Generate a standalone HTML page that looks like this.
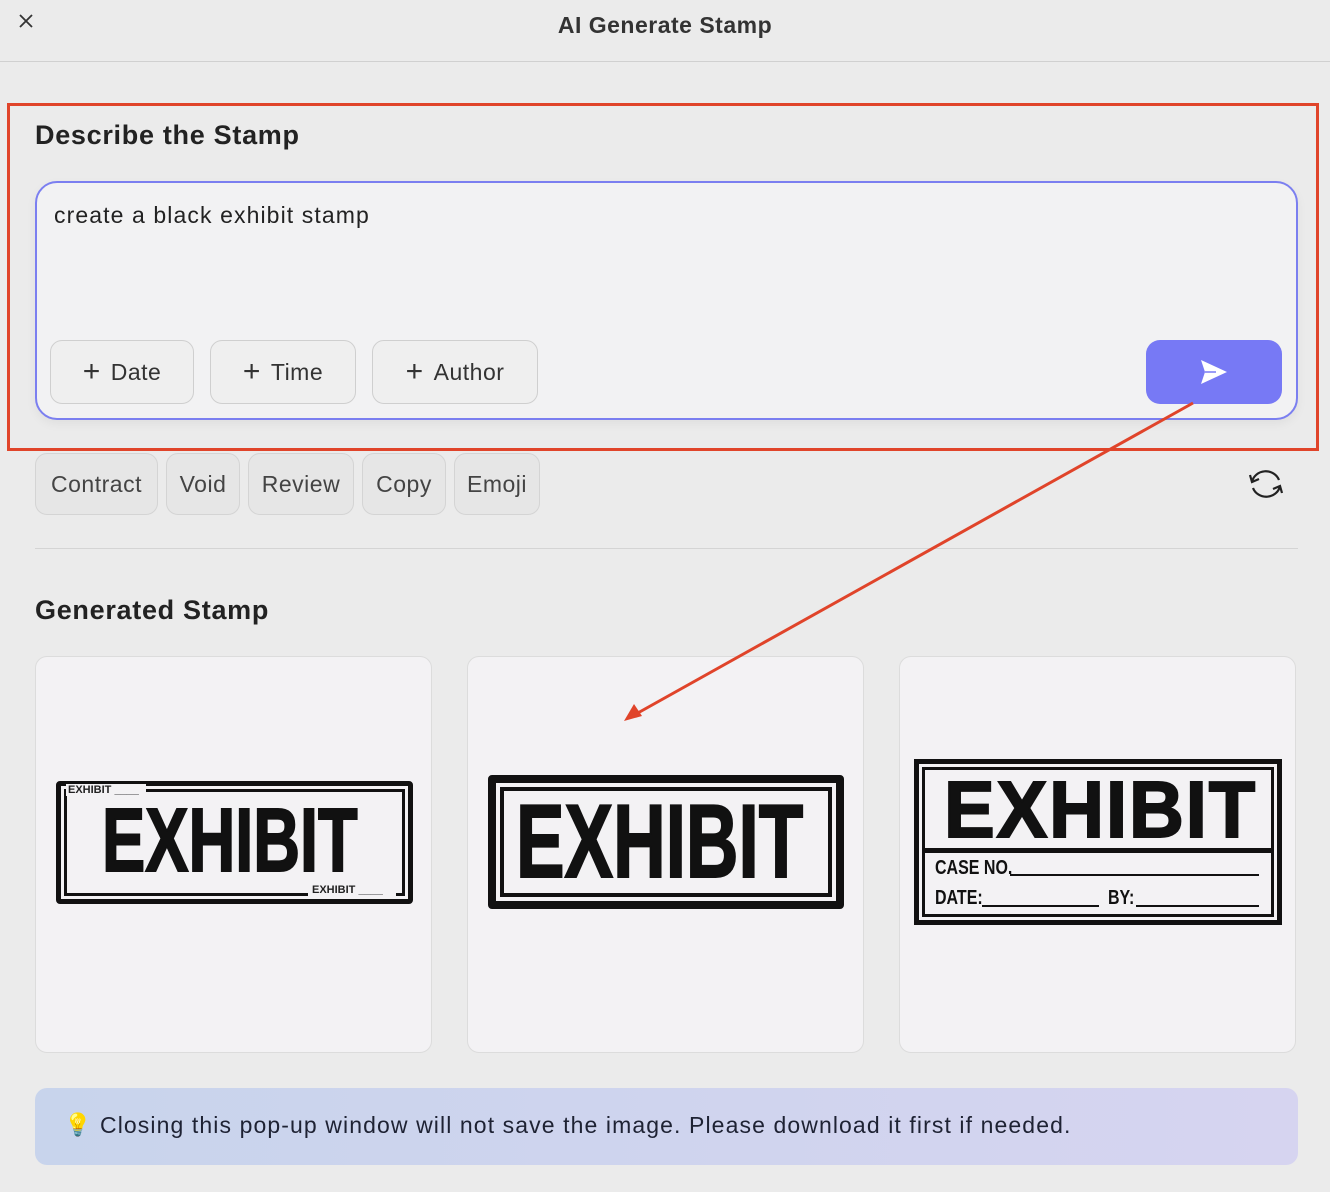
<!DOCTYPE html>
<html><head><style>
*{margin:0;padding:0;box-sizing:border-box}
body{width:1330px;height:1192px;background:#ebebeb;font-family:"Liberation Sans",sans-serif;color:#222;position:relative;overflow:hidden}
.a{position:absolute}
.btn{position:absolute;border:1px solid #cfcfcf;border-radius:12px;background:#efefef;font-size:23px;color:#333;display:flex;align-items:center;justify-content:center;letter-spacing:0.5px}
.chip{position:absolute;top:453px;height:62px;border:1px solid #d4d4d4;border-radius:12px;background:#e6e6e6;font-size:23px;color:#444;display:flex;align-items:center;justify-content:center;letter-spacing:0.5px}
.card{position:absolute;top:656px;width:397px;height:397px;background:#f3f2f4;border:1px solid #dcdcdc;border-radius:12px}
.big{font-family:"Liberation Sans Narrow","Liberation Sans",sans-serif;font-weight:bold;color:#111;position:absolute;white-space:nowrap;transform-origin:left top}
</style></head><body>
<svg class="a" style="left:18px;top:13px" width="16" height="16" viewBox="0 0 16 16" stroke="#333" stroke-width="1.8"><path d="M2 2L14 14M14 2L2 14"/></svg>
<div class="a" style="left:0;width:1330px;top:12px;text-align:center;font-size:23px;font-weight:bold;color:#333;letter-spacing:0.5px">AI Generate Stamp</div>
<div class="a" style="left:0;top:61px;width:1330px;height:1px;background:#d0d0d0"></div>

<div class="a" style="left:7px;top:103px;width:1312px;height:348px;border:3px solid #e0442a"></div>
<div class="a" style="left:35px;top:120px;font-size:27px;font-weight:bold;color:#222;letter-spacing:0.7px">Describe the Stamp</div>
<div class="a" style="left:35px;top:181px;width:1263px;height:239px;border:2px solid #7b7ff0;border-radius:22px;background:#f2f2f3;box-shadow:0 4px 10px rgba(0,0,0,.05)"></div>
<div class="a" style="left:54px;top:202px;font-size:23px;color:#222;letter-spacing:1.1px">create a black exhibit stamp</div>
<div class="btn" style="left:50px;top:340px;width:144px;height:64px"><span style="font-size:30px;font-weight:300;margin-right:10px">+</span>Date</div>
<div class="btn" style="left:210px;top:340px;width:146px;height:64px"><span style="font-size:30px;font-weight:300;margin-right:10px">+</span>Time</div>
<div class="btn" style="left:372px;top:340px;width:166px;height:64px"><span style="font-size:30px;font-weight:300;margin-right:10px">+</span>Author</div>
<div class="a" style="left:1146px;top:340px;width:136px;height:64px;background:#7779f5;border-radius:14px"></div>
<svg class="a" style="left:1198px;top:358px" width="32" height="28" viewBox="0 0 32 28"><path d="M3 2 L29 14 L3 26 L7 14 Z" fill="#fff"/><path d="M7 14 H18" stroke="#9a9cf7" stroke-width="2"/></svg>

<div class="chip" style="left:35px;width:123px">Contract</div>
<div class="chip" style="left:166px;width:74px">Void</div>
<div class="chip" style="left:248px;width:106px">Review</div>
<div class="chip" style="left:362px;width:84px">Copy</div>
<div class="chip" style="left:454px;width:86px">Emoji</div>
<svg class="a" style="left:1248px;top:466px" width="36" height="36" viewBox="0 0 36 36" fill="none" stroke="#222" stroke-width="2.2"><path d="M4 16 A14 13 0 0 1 31 14"/><path d="M2 9 L4 16 L11 13"/><path d="M32 20 A14 13 0 0 1 5 22"/><path d="M34 27 L32 20 L25 23"/></svg>
<div class="a" style="left:35px;top:548px;width:1263px;height:1px;background:#d4d4d4"></div>
<div class="a" style="left:35px;top:595px;font-size:27px;font-weight:bold;color:#222;letter-spacing:0.7px">Generated Stamp</div>

<div class="card" style="left:35px"></div>
<div class="card" style="left:467px"></div>
<div class="card" style="left:899px"></div>

<!-- stamp 1 -->
<div class="a" style="left:56px;top:781px;width:357px;height:123px;border:5px solid #111;border-radius:4px"></div>
<div class="a" style="left:64px;top:789px;width:341px;height:107px;border:3px solid #111"></div>
<div class="a" style="left:66px;top:784px;width:80px;height:12px;background:#f3f2f4;font-size:11px;font-weight:bold;padding-left:2px">EXHIBIT ____</div>
<div class="a" style="left:308px;top:884px;width:88px;height:14px;background:#f3f2f4;font-size:11px;font-weight:bold;padding-left:4px">EXHIBIT ____</div>
<div class="big" style="left:102px;top:796px;font-size:90px;line-height:90px;transform:scaleX(0.72);-webkit-text-stroke:2px #111">EXHIBIT</div>
<!-- stamp 2 -->
<div class="a" style="left:488px;top:775px;width:356px;height:134px;border:8px solid #111;border-radius:4px"></div>
<div class="a" style="left:500px;top:787px;width:332px;height:110px;border:4px solid #111"></div>
<div class="big" style="left:516px;top:790px;font-size:104px;line-height:104px;transform:scaleX(0.70);-webkit-text-stroke:2px #111">EXHIBIT</div>
<!-- stamp 3 -->
<div class="a" style="left:914px;top:759px;width:368px;height:166px;border:5px solid #111"></div>
<div class="a" style="left:922px;top:767px;width:352px;height:150px;border:3px solid #111"></div>
<div class="a" style="left:922px;top:848px;width:352px;height:5px;background:#111"></div>
<div class="big" style="left:944px;top:770px;font-size:80px;line-height:80px;transform:scaleX(0.95);-webkit-text-stroke:2px #111;letter-spacing:2px">EXHIBIT</div>
<div class="big" style="left:935px;top:857px;font-size:20px;transform:scaleX(0.8)">CASE NO.</div>
<div class="a" style="left:1010px;top:874px;width:249px;height:2px;background:#111"></div>
<div class="big" style="left:935px;top:887px;font-size:20px;transform:scaleX(0.8)">DATE:</div>
<div class="a" style="left:982px;top:905px;width:117px;height:2px;background:#111"></div>
<div class="big" style="left:1108px;top:887px;font-size:20px;transform:scaleX(0.8)">BY:</div>
<div class="a" style="left:1136px;top:905px;width:123px;height:2px;background:#111"></div>

<div class="a" style="left:35px;top:1088px;width:1263px;height:77px;border-radius:12px;background:linear-gradient(90deg,#c8d4ec,#d6d4f0)"></div>
<div class="a" style="left:64px;top:1112px;font-size:22px">💡</div>
<div class="a" style="left:100px;top:1112px;font-size:23px;color:#1e2233;letter-spacing:1.1px">Closing this pop-up window will not save the image. Please download it first if needed.</div>

<svg class="a" style="left:0;top:0" width="1330" height="1192"><line x1="1193" y1="403" x2="636" y2="714" stroke="#e0442a" stroke-width="3"/><path d="M624 721 L634 704 L642 716 Z" fill="#e0442a"/></svg>
</body></html>
